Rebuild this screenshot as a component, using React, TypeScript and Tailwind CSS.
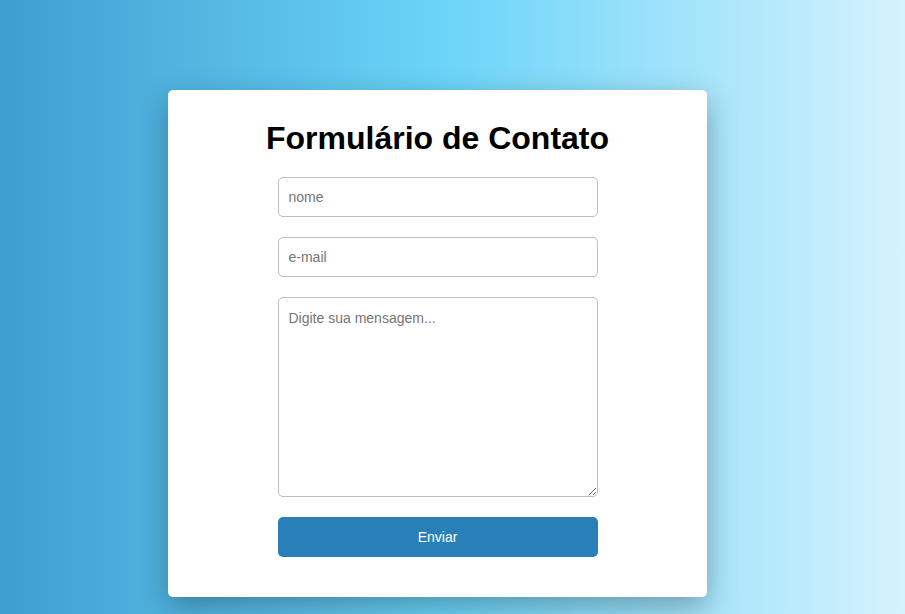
import React from 'react';

const fieldClass =
  'w-full h-10 px-[10px] rounded-[5px] border border-[#bdbdbd] bg-white text-sm text-[#222] placeholder:text-[#757575] outline-none';

export default function App() {
  return (
    <div
      className="min-h-screen w-full bg-[linear-gradient(to_right,#3f9ed0,#6bd4f8_49%,#d5f2fd)] flex justify-center pt-[90px] pr-[30px]"
      style={{ fontFamily: '"Liberation Sans", Arial, sans-serif' }}
    >
      <div className="w-[539px] h-[507px] bg-white rounded-[5px] shadow-[0_10px_30px_rgba(0,0,0,0.3)] flex flex-col items-center pt-[30px]">
        <h1 className="text-[32px] leading-[37px] font-bold text-black mb-[20px]">
          Formulário de Contato
        </h1>

        <form className="w-[320px] flex flex-col gap-5" onSubmit={(e) => e.preventDefault()}>
          <input type="text" placeholder="nome" className={fieldClass} />
          <input type="email" placeholder="e-mail" className={fieldClass} />
          <textarea
            placeholder="Digite sua mensagem..."
            className="w-full h-[200px] p-[10px] rounded-[5px] border border-[#bdbdbd] bg-white text-sm text-[#222] placeholder:text-[#757575] outline-none resize-y"
          />
          <button
            type="submit"
            className="w-full h-10 rounded-[5px] bg-[#2980b9] text-white text-sm"
          >
            Enviar
          </button>
        </form>
      </div>
    </div>
  );
}
